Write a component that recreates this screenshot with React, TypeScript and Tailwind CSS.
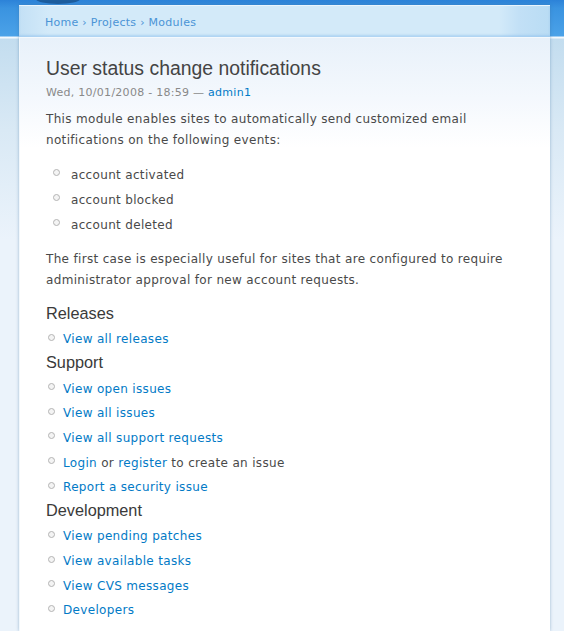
import React from "react";

const Bullet = () => (
  <span className="inline-block w-[7px] h-[7px] rounded-full border border-[#b4b4b4] bg-[#f4f4f4] shrink-0" />
);

const LinkRow = ({ children }: { children: React.ReactNode }) => (
  <li className="flex items-center h-[24.67px] leading-[20px] pt-[3.5px] box-border">
    <span className="w-[17px] flex items-center pl-[2px] -mt-[4px]">
      <Bullet />
    </span>
    <span>{children}</span>
  </li>
);

const A = ({ children }: { children: React.ReactNode }) => (
  <a href="#" className="text-[#027ac6] no-underline">
    {children}
  </a>
);

const H3 = ({ children }: { children: React.ReactNode }) => (
  <h3 className="h-[24.67px] leading-[24.67px] text-[16.3px] tracking-normal text-[#3a3a3a] font-normal font-['Liberation_Sans',Arial,sans-serif]">
    {children}
  </h3>
);

export default function App() {
  return (
    <div className="relative w-full min-h-[631px] overflow-hidden font-['DejaVu_Sans',Verdana,sans-serif] text-[12px] tracking-[0.33px] text-[#494949] bg-[linear-gradient(to_bottom,#2c82d8_0px,#3a93e0_8px,#4ba2e8_36px,#f4f9fd_37px,#f4f9fd_38px,#c3ddef_39px,#d9e9f5_130px,#ebf3fb_240px,#ebf3fb_100%)] pt-[5px] pl-[19px] pr-[14px]">
      <div className="absolute left-[36px] top-[-6px] w-[44px] h-[10px] rounded-[50%] bg-[#1c5d9e]" />
      <div className="relative flex flex-col min-h-[626px] shadow-[0_0_3px_rgba(60,110,160,0.45)]">
        <div className="h-[32px] border-t border-[#eaf5fd] bg-[linear-gradient(to_right,#c3e0f5_0px,#d3eaf9_30px,#d3eaf9_480px,#c2e0f6_500px,#b9dcf4_531px)] shadow-[inset_0_-2px_2px_rgba(140,190,235,0.5)] pl-[26px] flex items-center">
          <div className="text-[11px] tracking-[0.27px] text-[#4a94d6] mt-[3px]">
            <span>Home</span> <span>›</span> <span>Projects</span> <span>›</span> <span>Modules</span>
          </div>
        </div>
        <div className="h-[1px] bg-[#f4f9fd]" />
        <div className="flex-1 border-l border-[#f2f8fd] bg-[linear-gradient(to_bottom,#e8f1fa_0px,#f4f8fd_60px,#ffffff_110px,#ffffff_100%)] pl-[26px] pr-[20px]">
          <h2 className="mt-[18px] h-[24px] leading-[24px] text-[19.4px] tracking-normal text-[#444] font-normal font-['Liberation_Sans',Arial,sans-serif]">
            User status change notifications
          </h2>
          <div className="mt-[5px] h-[16px] leading-[16px] text-[11px] tracking-[0.27px] text-[#898989]">
            Wed, 10/01/2008 - 18:59 — <A>admin1</A>
          </div>
          <p className="mt-[8px] leading-[21px]">
            This module enables sites to automatically send customized email notifications on the following events:
          </p>
          <ul className="mt-[11.5px] pl-[7px]">
            {["account activated", "account blocked", "account deleted"].map((t) => (
              <li key={t} className="flex items-center h-[25px] leading-[25px]">
                <span className="w-[18px] flex items-center -mt-[5px]">
                  <Bullet />
                </span>
                <span>{t}</span>
              </li>
            ))}
          </ul>
          <p className="mt-[11px] leading-[21px]">
            The first case is especially useful for sites that are configured to require administrator approval for new account requests.
          </p>
          <div className="mt-[10px]">
            <H3>Releases</H3>
            <ul>
              <LinkRow><A>View all releases</A></LinkRow>
            </ul>
            <H3>Support</H3>
            <ul>
              <LinkRow><A>View open issues</A></LinkRow>
              <LinkRow><A>View all issues</A></LinkRow>
              <LinkRow><A>View all support requests</A></LinkRow>
              <LinkRow>
                <A>Login</A> or <A>register</A> to create an issue
              </LinkRow>
              <LinkRow><A>Report a security issue</A></LinkRow>
            </ul>
            <H3>Development</H3>
            <ul>
              <LinkRow><A>View pending patches</A></LinkRow>
              <LinkRow><A>View available tasks</A></LinkRow>
              <LinkRow><A>View CVS messages</A></LinkRow>
              <LinkRow><A>Developers</A></LinkRow>
            </ul>
          </div>
        </div>
      </div>
    </div>
  );
}
